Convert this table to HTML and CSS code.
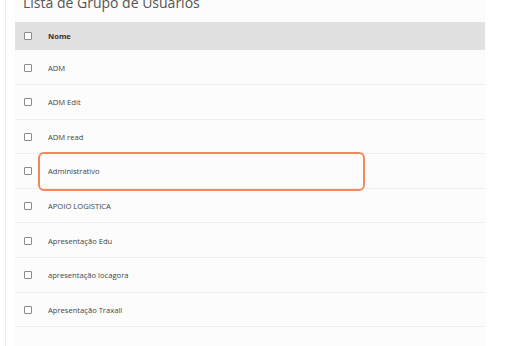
FILE: index.html
```html
<!DOCTYPE html>
<html lang="pt-BR">
<head>
<meta charset="utf-8">
<title>Lista de Grupo de Usuarios</title>
<link rel="stylesheet" href="styles.css">
</head>
<body>
<div class="page">
  <div class="rail"></div>
  <section class="panel">
    <h1 class="title">Lista de Grupo de Usuarios</h1>
    <div class="table">
      <div class="row head"><span class="check"></span><span class="cell">Nome</span></div>
      <div class="row"><span class="check"></span><span class="cell">ADM</span></div>
      <div class="row"><span class="check"></span><span class="cell">ADM Edit</span></div>
      <div class="row"><span class="check"></span><span class="cell">ADM read</span></div>
      <div class="row marked"><span class="check"></span><span class="cell">Administrativo</span><span class="mark"></span></div>
      <div class="row"><span class="check"></span><span class="cell">APOIO LOGISTICA</span></div>
      <div class="row"><span class="check"></span><span class="cell">Apresentação Edu</span></div>
      <div class="row"><span class="check"></span><span class="cell">apresentação locagora</span></div>
      <div class="row"><span class="check"></span><span class="cell">Apresentação Traxall</span></div>
    </div>
  </section>
</div>
</body>
</html>
```
FILE: styles.css
```css
*, *::before, *::after {
  box-sizing: border-box;
}

html, body {
  margin: 0;
  padding: 0;
  background: #ffffff;
  font-family: "Open Sans", "Noto Sans", sans-serif;
  overflow: hidden;
}

.page {
  display: flex;
  height: 346px;
}

.rail {
  width: 6px;
  border-right: 1px solid #ececec;
  flex: none;
}

.panel {
  width: 470px;
  margin-left: 9px;
  background: #fcfcfc;
  flex: none;
}

.title {
  margin: -9px 0 0 8px;
  height: 31px;
  font-size: 14px;
  font-weight: 400;
  line-height: 24px;
  color: #555;
}

.table {
  display: flex;
  flex-direction: column;
}

.row {
  position: relative;
  display: flex;
  align-items: center;
  height: 34.6px;
  padding-top: 1px;
  border-bottom: 1px solid #eeeeee;
  font-size: 7.6px;
  color: #444;
}

.row.head {
  height: 28.4px;
  padding-top: 0;
  background: #e1e1e1;
  border-bottom: none;
  font-weight: 700;
  color: #333;
}

.check {
  width: 8px;
  height: 8px;
  border: 1px solid #8a8a8a;
  border-radius: 1px;
  margin-left: 9px;
  margin-right: 16px;
  background: #fff;
  flex: none;
}

.cell {
  white-space: nowrap;
}

.mark {
  position: absolute;
  left: 23px;
  top: -2px;
  width: 327px;
  height: 39px;
  border: 2px solid #f5875c;
  border-radius: 6px;
}
```
